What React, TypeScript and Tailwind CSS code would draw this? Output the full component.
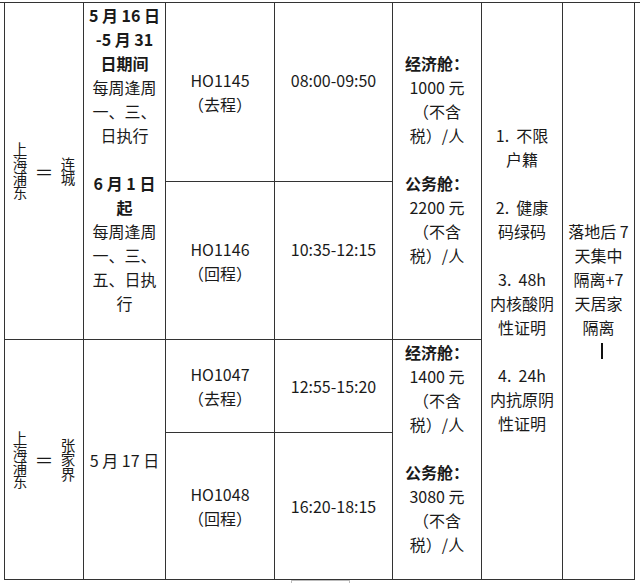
import type { ReactNode } from "react";

type Line = { text: string; bold?: boolean };

// Shorthands for writing the cell contents.
const n = (text: string): Line => ({ text });
const b = (text: string): Line => ({ text, bold: true });
const BLANK: Line = { text: "" };

function Cell({ lines, className = "" }: { lines: Line[]; className?: string }) {
  return (
    <div
      className={`flex flex-col items-center justify-center overflow-hidden bg-white text-center ${className}`}
    >
      {lines.map((l, i) => (
        <div
          key={i}
          className={`whitespace-pre leading-[24px] ${l.bold ? "font-bold" : ""}`}
        >
          {l.text || "\u00a0"}
        </div>
      ))}
    </div>
  );
}

// Route names are set top to bottom.
function Vertical({ children }: { children: ReactNode }) {
  return (
    <div className="w-[15px] text-[14.5px] leading-[15px] [text-orientation:upright] [writing-mode:vertical-lr]">
      {children}
    </div>
  );
}

function Route({ to, className = "" }: { to: string; className?: string }) {
  return (
    <div className={`flex items-center justify-center gap-[9px] bg-white ${className}`}>
      <Vertical>上海浦东</Vertical>
      <div className="flex w-[15px] justify-center text-[19px] leading-none">＝</div>
      <Vertical>{to}</Vertical>
    </div>
  );
}

function Wrap({ children }: { children: ReactNode }) {
  return (
    <div className="min-h-[583px] w-[640px] bg-white pt-[2px] font-['Noto_Sans_CJK_SC','Lato',sans-serif] text-[16px] text-[#1a1a1a]">
      {children}
    </div>
  );
}

export default function App() {
  return (
    <Wrap>
      <div className="h-px bg-[#333]" />
      <div className="ml-[4px] grid w-fit grid-cols-[78px_81px_108px_117px_88px_80px_71px] grid-rows-[178px_157px_92px_146px] gap-px bg-[#333] px-px pb-px">
        {/* 上海浦东 = 连城 */}
        <Route to="连城" className="col-start-1 row-span-2 row-start-1" />
        <Cell
          className="col-start-2 row-span-2 row-start-1"
          lines={[
            b("5 月 16 日"),
            b("-5 月 31"),
            b("日期间"),
            n("每周逢周"),
            n("一、三、"),
            n("日执行"),
            BLANK,
            b("6 月 1 日"),
            b("起"),
            n("每周逢周"),
            n("一、三、"),
            n("五、日执"),
            n("行"),
            BLANK,
          ]}
        />
        <Cell className="col-start-3 row-start-1" lines={[n("HO1145"), n("（去程）")]} />
        <Cell className="col-start-4 row-start-1" lines={[n("08:00-09:50"), BLANK]} />
        <Cell className="col-start-3 row-start-2" lines={[n("HO1146"), n("（回程）")]} />
        <Cell className="col-start-4 row-start-2" lines={[n("10:35-12:15"), BLANK]} />
        <Cell
          className="col-start-5 row-span-2 row-start-1"
          lines={[
            b("经济舱："),
            n("1000 元"),
            n("（不含"),
            n("税）/人"),
            BLANK,
            b("公务舱："),
            n("2200 元"),
            n("（不含"),
            n("税）/人"),
            BLANK,
          ]}
        />

        {/* conditions + quarantine span both routes */}
        <Cell
          className="col-start-6 row-span-4 row-start-1"
          lines={[
            n("1.  不限"),
            n("户籍"),
            BLANK,
            n("2.  健康"),
            n("码绿码"),
            BLANK,
            n("3.  48h"),
            n("内核酸阴"),
            n("性证明"),
            BLANK,
            n("4.  24h"),
            n("内抗原阴"),
            n("性证明"),
            BLANK,
          ]}
        />
        <div className="col-start-7 row-span-4 row-start-1 flex flex-col items-center justify-center bg-white text-center leading-[24px]">
          <div className="whitespace-pre">落地后 7</div>
          <div>天集中</div>
          <div>隔离+7</div>
          <div>天居家</div>
          <div>隔离</div>
          <div className="flex h-[24px] items-center">
            <span className="ml-[6px] inline-block h-[16px] w-[2px] bg-[#111]" />
          </div>
        </div>

        {/* 上海浦东 = 张家界 */}
        <Route to="张家界" className="col-start-1 row-span-2 row-start-3" />
        <Cell className="col-start-2 row-span-2 row-start-3" lines={[n("5 月 17 日")]} />
        <Cell className="col-start-3 row-start-3" lines={[n("HO1047"), n("（去程）")]} />
        <Cell className="col-start-4 row-start-3" lines={[n("12:55-15:20")]} />
        <Cell className="col-start-3 row-start-4" lines={[n("HO1048"), n("（回程）")]} />
        <Cell className="col-start-4 row-start-4" lines={[n("16:20-18:15")]} />
        <Cell
          className="col-start-5 row-span-2 row-start-3"
          lines={[
            b("经济舱："),
            n("1400 元"),
            n("（不含"),
            n("税）/人"),
            BLANK,
            b("公务舱："),
            n("3080 元"),
            n("（不含"),
            n("税）/人"),
            BLANK,
          ]}
        />
      </div>
      <div className="ml-[291px] h-[3px] w-[59px] border-x border-t border-[#bbb]" />
    </Wrap>
  );
}
